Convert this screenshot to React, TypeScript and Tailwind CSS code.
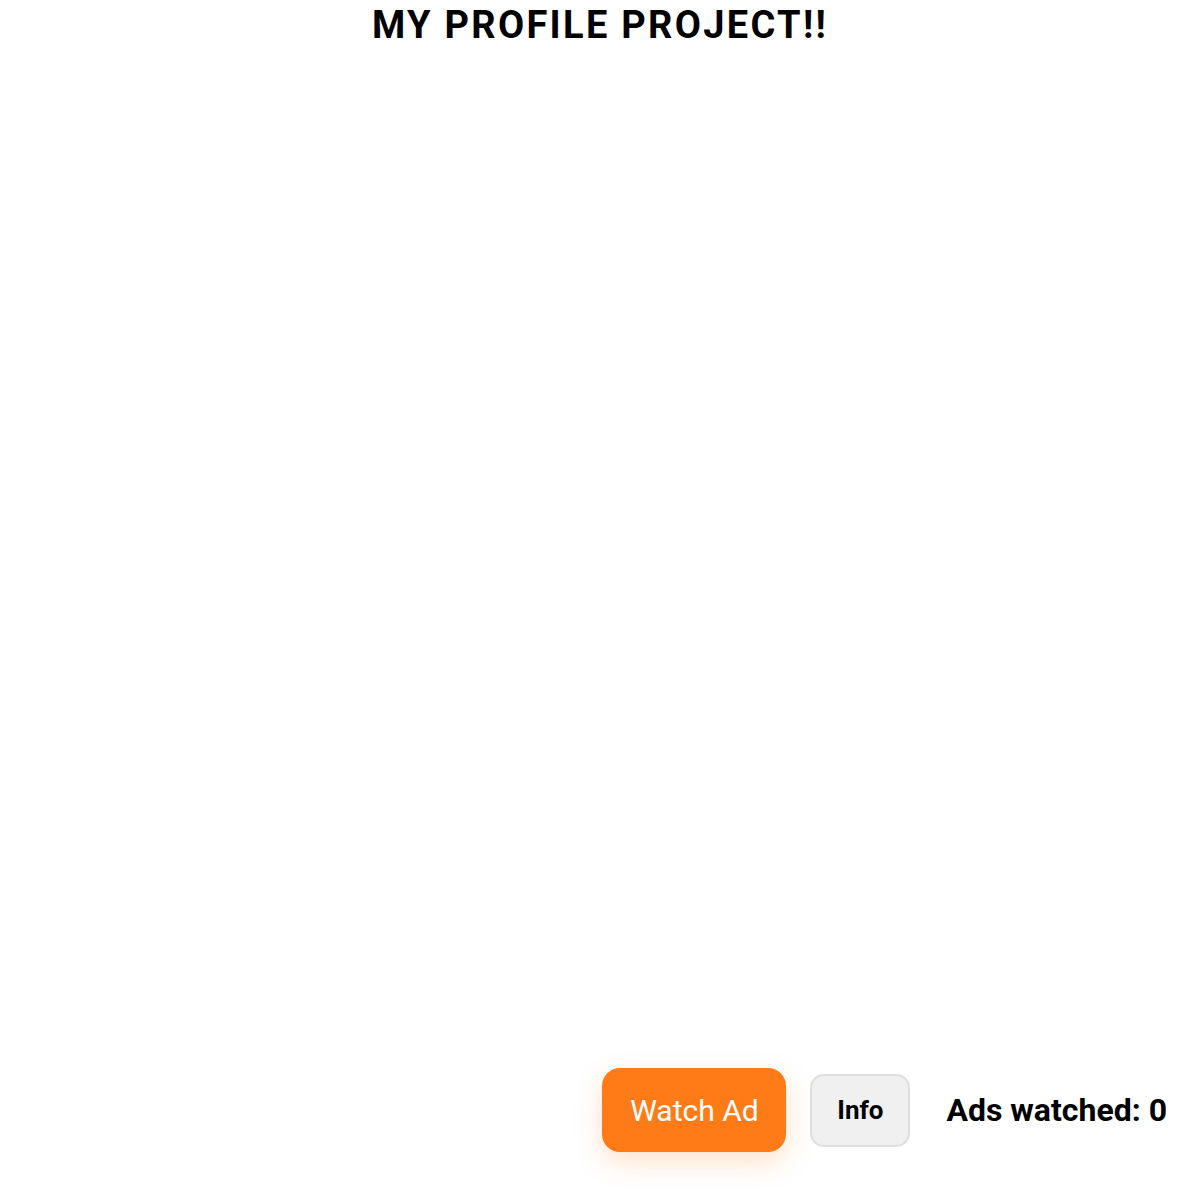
import { useState } from "react";

const App = () => {
  const [adsWatched, setAdsWatched] = useState(0);

  return (
    <div className="flex min-h-screen flex-col bg-white font-['Roboto','Liberation_Sans',sans-serif] text-black">
      {/* Title */}
      <h1 className="m-0 pt-[3px] text-center text-[38px] font-bold leading-[normal] tracking-[2.3px]">
        MY PROFILE PROJECT!!
      </h1>

      {/* Bottom controls */}
      <div className="mt-auto flex items-center justify-end pb-[48px] pr-[33px]">
        <button
          onClick={() => setAdsWatched(adsWatched + 1)}
          className="flex h-[84px] w-[184px] items-center justify-center rounded-[18px] bg-[#ff7b17] text-[30px] font-normal text-white shadow-[0_10px_28px_rgba(255,123,23,0.22)]"
        >
          Watch Ad
        </button>
        <button className="ml-[24px] flex h-[73px] w-[100px] items-center justify-center rounded-[14px] border-2 border-[#dedede] bg-[#f0f0f0] text-[26px] font-bold text-black">
          Info
        </button>
        <div className="ml-[36px] text-[32px] font-bold leading-[normal]">
          Ads watched: {adsWatched}
        </div>
      </div>
    </div>
  );
};

export default App;
